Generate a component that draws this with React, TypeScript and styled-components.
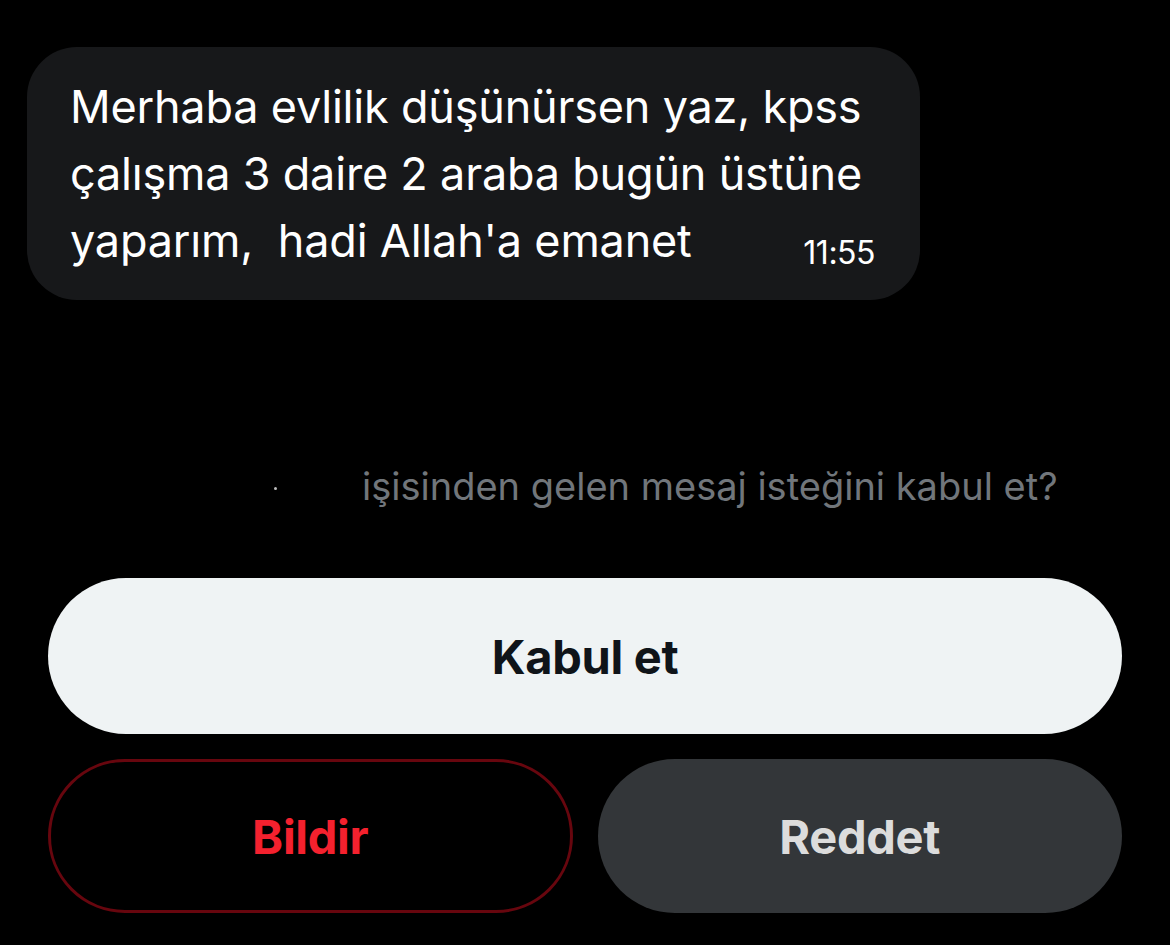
import styled, { createGlobalStyle } from "styled-components";

const Global = createGlobalStyle`
html, body {
    margin: 0;
    background: #000;
}
body {
    font-family: Inter, "Noto Sans", sans-serif;
}`

const Page = styled.div`
width: 1170px;
height: 945px;
background: #000;
display: flex;
flex-direction: column;
overflow: hidden;
`

const Bubble = styled.div`
align-self: flex-start;
margin: 47px 0 0 27px;
width: 893px;
box-sizing: border-box;
height: 253px;
padding: 26px 40px 0 43px;
background: #17181a;
border-radius: 50px;
position: relative;
`

const MsgText = styled.div`
color: #fff;
font-size: 45px;
line-height: 67px;
font-weight: 400;
letter-spacing: -0.2px;
`

const Time = styled.span`
position: absolute;
right: 45px;
bottom: 28px;
color: #fff;
font-size: 32px;
letter-spacing: -0.5px;
`

const Prompt = styled.div`
margin: 161px 0 0 362px;
color: #71767b;
font-size: 38px;
line-height: 50px;
position: relative;
`

const Speck = styled.span`
position: absolute;
left: -88px;
top: 26px;
width: 3px;
height: 3px;
background: #bbb;
border-radius: 50%;
`

const Actions = styled.div`
margin: 67px 48px 0 48px;
display: flex;
flex-direction: column;
gap: 25px;
`

const Row = styled.div`
display: grid;
grid-template-columns: 1fr 1fr;
gap: 25px;
`

const Btn = styled.button<{ $variant: "primary" | "danger" | "muted" }>`
height: ${p => p.$variant === "primary" ? 156 : 154}px;
border-radius: 80px;
font-family: Inter, "Noto Sans", sans-serif;
font-size: 47px;
font-weight: 700;
letter-spacing: -0.3px;
cursor: pointer;
box-sizing: border-box;
padding: 0;
background: ${p => p.$variant === "primary" ? "#eff3f4" : p.$variant === "muted" ? "#333639" : "transparent"};
color: ${p => p.$variant === "primary" ? "#0f1419" : p.$variant === "muted" ? "#dcdcdc" : "#f4212e"};
border: ${p => p.$variant === "danger" ? "3px solid #67060e" : "none"};
`

export default function App() {
  return (
    <Page>
        <Global />
        <Bubble>
            <MsgText>
                Merhaba evlilik düşünürsen yaz, kpss<br />
                çalışma 3 daire 2 araba bugün üstüne<br />
                yaparım,&nbsp; hadi Allah'a emanet
            </MsgText>
            <Time>11:55</Time>
        </Bubble>
        <Prompt>
            <Speck />
            işisinden gelen mesaj isteğini kabul et?
        </Prompt>
        <Actions>
            <Btn $variant="primary">Kabul et</Btn>
            <Row>
                <Btn $variant="danger">Bildir</Btn>
                <Btn $variant="muted">Reddet</Btn>
            </Row>
        </Actions>
    </Page>
  )
}
